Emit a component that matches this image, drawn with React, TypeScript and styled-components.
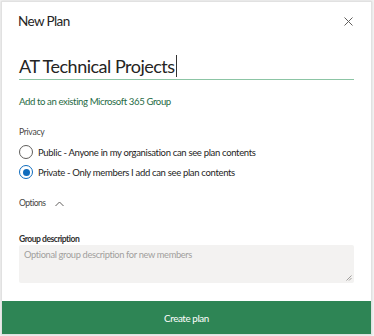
import React from 'react';
import styled, { createGlobalStyle } from 'styled-components';

const GlobalStyle = createGlobalStyle`
  html, body {
    margin: 0;
    padding: 0;
    background: #f3f3f3;
  }
  body {
    font-family: 'Lato', 'Open Sans', sans-serif;
  }
`;

const Page = styled.div`
  padding: 1px 2px 1px 1px;
  width: 374px;
  height: 336px;
  box-sizing: border-box;
`;

const Dialog = styled.div`
  width: 371px;
  height: 334px;
  box-sizing: border-box;
  background: #fff;
  border: 1px solid #e1e1e1;
  box-shadow: 0 0 2px rgba(0, 0, 0, 0.12);
  display: flex;
  flex-direction: column;
`;

const Header = styled.div`
  display: flex;
  align-items: center;
  justify-content: space-between;
  height: 38px;
  padding: 0 16px 0 16px;
`;

const Title = styled.h1`
  margin: 0;
  font-size: 13.5px;
  letter-spacing: -0.6px;
  font-weight: 400;
  color: #252423;
`;

const CloseButton = styled.button`
  border: none;
  background: none;
  padding: 0;
  width: 14px;
  height: 14px;
  display: flex;
  align-items: center;
  justify-content: center;
  cursor: pointer;
`;

const Body = styled.div`
  flex: 1;
  padding: 0 17px 0 17px;
  display: flex;
  flex-direction: column;
`;

const NameField = styled.div`
  margin-top: 13px;
  border-bottom: 1px solid #8cc5a5;
  height: 26px;
  display: flex;
  align-items: center;
`;

const NameText = styled.span`
  font-size: 18px;
  letter-spacing: -0.5px;
  color: #252423;
  line-height: 26px;
`;

const Caret = styled.span`
  display: inline-block;
  width: 1px;
  height: 22px;
  background: #333;
  margin-left: 1px;
`;

const Link = styled.a`
  margin-top: 15px;
  font-size: 9.6px;
  letter-spacing: -0.4px;
  color: #1f6b45;
  text-decoration: none;
  line-height: 14px;
`;

const Label = styled.div<{ $top: number; $strong?: boolean }>`
  margin-top: ${p => p.$top}px;
  font-size: 8.6px;
  letter-spacing: ${p => (p.$strong ? '-0.5px' : '-0.3px')};
  line-height: ${p => (p.$strong ? 9 : 13)}px;
  color: ${p => (p.$strong ? '#323130' : '#484644')};
  font-weight: ${p => (p.$strong ? 700 : 400)};
`;

const RadioList = styled.div`
  margin-top: 6px;
  display: flex;
  flex-direction: column;
  gap: 6px;
`;

const RadioRow = styled.label`
  display: flex;
  align-items: center;
  gap: 5px;
  height: 14px;
  font-size: 9.5px;
  letter-spacing: -0.33px;
  color: #252423;
`;

const RadioCircle = styled.span<{ $checked?: boolean }>`
  width: 14px;
  height: 14px;
  box-sizing: border-box;
  border-radius: 50%;
  border: 1px solid ${p => (p.$checked ? '#0f6cbd' : '#605e5c')};
  display: flex;
  align-items: center;
  justify-content: center;
  &::after {
    content: '';
    width: 7px;
    height: 7px;
    border-radius: 50%;
    background: ${p => (p.$checked ? '#0f6cbd' : 'transparent')};
  }
`;

const OptionsToggle = styled.div`
  margin-top: 18px;
  display: flex;
  align-items: center;
  gap: 9px;
  font-size: 8.6px;
  letter-spacing: -0.5px;
  line-height: 13px;
  color: #484644;
`;

const TextArea = styled.div`
  margin-top: 1px;
  height: 38px;
  background: #f3f2f1;
  border-radius: 2px;
  position: relative;
  padding: 4px 5px;
  box-sizing: border-box;
  font-size: 9.3px;
  letter-spacing: -0.35px;
  color: #a19f9d;
`;

const Grip = styled.svg`
  position: absolute;
  right: 2px;
  bottom: 2px;
`;

const CreateButton = styled.button`
  height: 33px;
  border: none;
  background: #2e8555;
  color: #fff;
  font-family: inherit;
  font-size: 9.8px;
  letter-spacing: -0.4px;
  cursor: pointer;
`;

export default function App() {
  return (
    <>
      <GlobalStyle />
      <Page>
        <Dialog>
          <Header>
            <Title>New Plan</Title>
            <CloseButton aria-label="Close">
              <svg width="9" height="9" viewBox="0 0 9 9">
                <path d="M0.5 0.5L8.5 8.5M8.5 0.5L0.5 8.5" stroke="#605e5c" strokeWidth="1" />
              </svg>
            </CloseButton>
          </Header>
          <Body>
            <NameField>
              <NameText>AT Technical Projects</NameText>
              <Caret />
            </NameField>
            <Link href="#">Add to an existing Microsoft 365 Group</Link>
            <Label $top={17}>Privacy</Label>
            <RadioList>
              <RadioRow>
                <RadioCircle />
                Public - Anyone in my organisation can see plan contents
              </RadioRow>
              <RadioRow>
                <RadioCircle $checked />
                Private - Only members I add can see plan contents
              </RadioRow>
            </RadioList>
            <OptionsToggle>
              Options
              <svg width="9" height="6" viewBox="0 0 9 6">
                <path d="M0.5 5L4.5 1L8.5 5" fill="none" stroke="#605e5c" strokeWidth="1" />
              </svg>
            </OptionsToggle>
            <Label $top={25} $strong>Group description</Label>
            <TextArea>
              Optional group description for new members
              <Grip width="6" height="6" viewBox="0 0 6 6">
                <path d="M5.5 0.5L0.5 5.5M5.5 3L3 5.5" stroke="#8a8886" strokeWidth="0.8" />
              </Grip>
            </TextArea>
          </Body>
          <CreateButton>Create plan</CreateButton>
        </Dialog>
      </Page>
    </>
  );
}
